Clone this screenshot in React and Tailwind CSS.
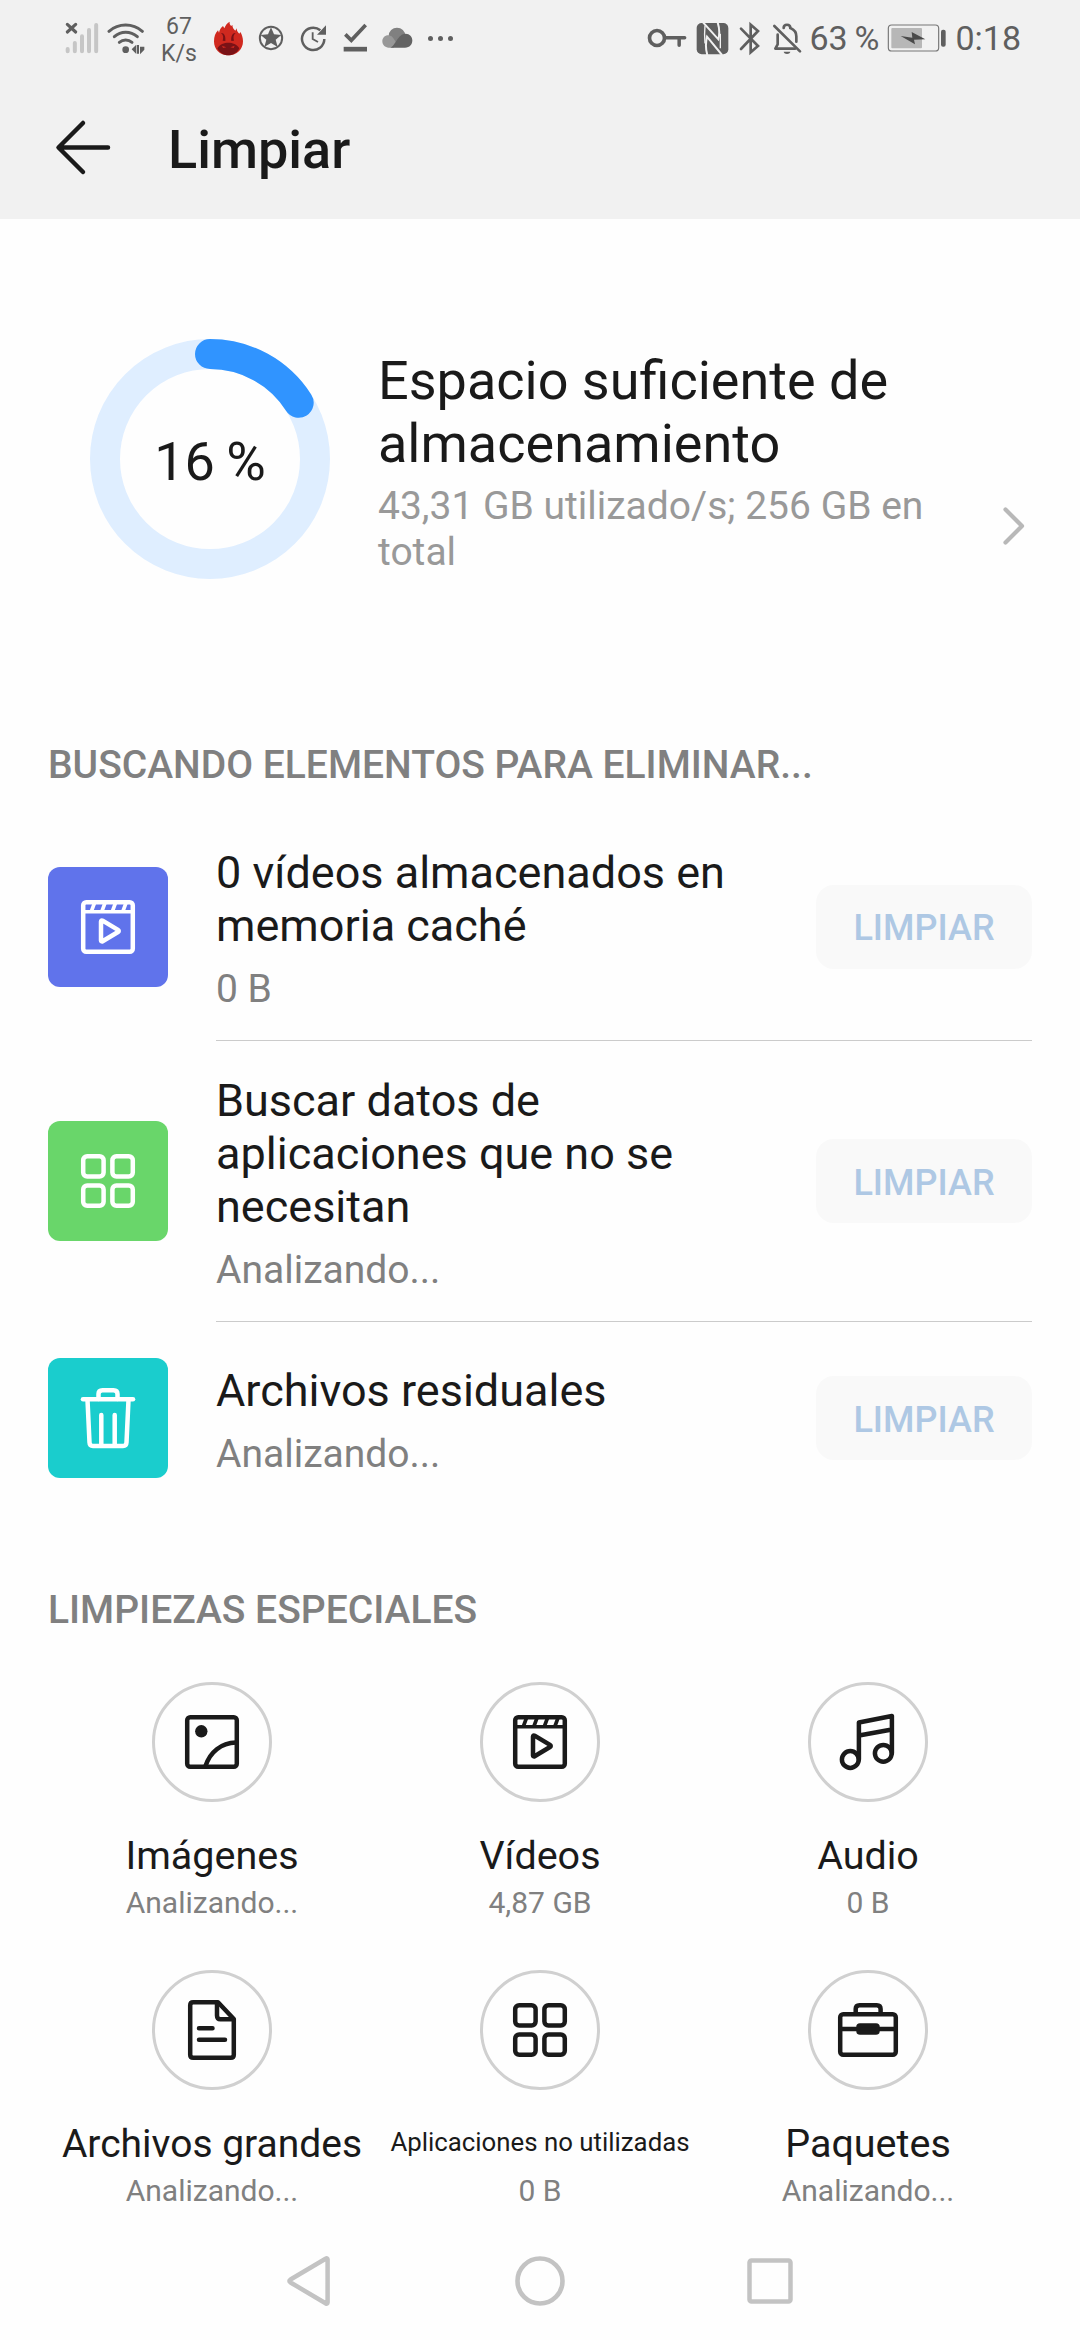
import React from "react";

/* ---------- Status bar icons ---------- */

function SignalIcon() {
  return (
    <svg width="35" height="35" viewBox="75 60 105 105" fill="none">
      <g stroke="#c6c6c6" strokeWidth="12" strokeLinecap="round">
        <path d="M83 144v7M104.500 126v25M126 106v45M147 87v64M168.500 72v79" />
      </g>
      <path d="M82 70l25 23M107 70L82 93" stroke="#5f5f5f" strokeWidth="9.500" strokeLinecap="round" />
    </svg>
  );
}

function WifiIcon() {
  return (
    <svg width="38" height="35" viewBox="201 60 114 105" fill="none">
      <g stroke="#5f5f5f" strokeWidth="9" strokeLinecap="round">
        <path d="M207 91C236 66 278 66 307 91" />
        <path d="M223 107C243 89 271 89 292 107" />
        <path d="M238 124C249 115 265 115 276 124" />
      </g>
      <circle cx="257" cy="146" r="10" fill="#5f5f5f" />
      <path d="M275 145L288 132V158ZM290 132H297V158H290ZM300 132V160L313 146V137H300Z" fill="#5f5f5f" />
    </svg>
  );
}

function FlameIcon() {
  return (
    <svg width="31" height="35" viewBox="521 62 93 105">
      <path
        d="M567 165C541 165 524 147 524 123C524 109 528 98 536 90L539 97C541 88 545 81 551 77L555 84C558 76 563 68 571 64C570 70 572 74 576 77L579 73C579 81 583 86 588 91L592 84C592 92 595 95 600 100L603 95C608 103 611 113 611 123C611 147 593 165 567 165Z"
        fill="#d0291f"
      />
      <path d="M534 144C541 132 555 127 567 127S593 132 600 144C594 157 582 165 567 165S540 157 534 144Z" fill="#7a1216" />
      <path d="M545 98C554 97 560 108 558 122L550 121C553 111 552 103 545 98ZM589 98C580 97 574 108 576 122L584 121C581 111 582 103 589 98Z" fill="#7a1216" />
      <path d="M548 136l13 5-10 2zM586 136l-13 5 10 2z" fill="#d0291f" />
    </svg>
  );
}

function StarIcon() {
  return (
    <svg width="26" height="26" viewBox="654 75 78 78">
      <circle cx="693" cy="114" r="33.500" fill="none" stroke="#5f5f5f" strokeWidth="6" />
      <path d="M693 82L702 103L724 105L707 119L713 141L693 129L673 141L679 119L662 105L684 103Z" fill="#5f5f5f" />
    </svg>
  );
}

function UpdateIcon() {
  return (
    <svg width="28" height="28" viewBox="777 72 84 84" fill="none">
      <path d="M841 91A33.500 33.500 0 1 0 853 117" stroke="#5f5f5f" strokeWidth="7.500" />
      <path d="M858 76V104H831Z" fill="#5f5f5f" />
      <path d="M818 97V117L834 126" stroke="#5f5f5f" strokeWidth="5.500" />
    </svg>
  );
}

function CheckIcon() {
  return (
    <svg width="25" height="30" viewBox="909 70 75 90" fill="none">
      <path d="M916 104L934 122L977 76" stroke="#5f5f5f" strokeWidth="11" />
      <path d="M911 148.500H981" stroke="#5f5f5f" strokeWidth="14" />
    </svg>
  );
}

function CloudIcon() {
  return (
    <svg width="31" height="22" viewBox="1025 82 93 66">
      <circle cx="1070" cy="109" r="25" fill="#808080" />
      <path d="M1044 107C1033 107 1026 115 1026 125S1034 144 1045 144H1060L1067 128C1060 118 1056 107 1044 107Z" fill="#989898" />
      <path d="M1050 144C1066 138 1072 102 1096 102C1108 102 1116 111 1116 122C1116 135 1108 144 1094 144Z" fill="#636363" />
    </svg>
  );
}

function KeyIcon() {
  return (
    <svg width="40" height="22" viewBox="81 78 120 66" fill="none" stroke="#5f5f5f">
      <circle cx="111" cy="111" r="22.500" strokeWidth="11" />
      <path d="M134 110.500H194M177.500 112V133" strokeWidth="10.500" strokeLinecap="round" />
    </svg>
  );
}

function NfcIcon() {
  return (
    <svg width="33" height="33" viewBox="229 61 99 99" fill="none">
      <rect x="231" y="64" width="95" height="94" rx="15" fill="#5f5f5f" />
      <path d="M250 62L296 113C300 98 299 78 294 62" stroke="#f1f1f1" strokeWidth="6" />
      <path d="M307 160L262 105C258 122 258 144 263 160" stroke="#f1f1f1" strokeWidth="6" />
      <path d="M256 72C254 90 254 100 256 125M302 96V140" stroke="#f1f1f1" strokeWidth="4" />
    </svg>
  );
}

function BluetoothIcon() {
  return (
    <svg width="22" height="35" viewBox="356 58 66 105" fill="none">
      <path d="M362 81L413 133L391 152V69L413 88L362 142" stroke="#5f5f5f" strokeWidth="8" strokeLinecap="round" />
    </svg>
  );
}

function BellOffIcon() {
  return (
    <svg width="30" height="35" viewBox="453 58 90 105" fill="none">
      <path d="M488 79C488 66 508 66 508 79C520 84 526 93 526 104V120" stroke="#5f5f5f" strokeWidth="8" strokeLinecap="round" />
      <path d="M470 99V128L463 141H522" stroke="#5f5f5f" strokeWidth="8" strokeLinejoin="round" strokeLinecap="round" />
      <path d="M460 73L537 149" stroke="#5f5f5f" strokeWidth="8" strokeLinecap="round" />
      <path d="M488 150H508C506 159 490 159 488 150Z" fill="#5f5f5f" />
    </svg>
  );
}

function BatteryIcon() {
  return (
    <svg width="60" height="30" viewBox="799 67 180 90">
      <rect x="803" y="73" width="151" height="78" rx="10" fill="none" stroke="#777" strokeWidth="3.500" />
      <rect x="812" y="82" width="92" height="61" rx="3" fill="#b7b7b7" />
      <path d="M840 106L875 111L873 94L914 116L880 117L883 131Z" fill="#4a4a4a" />
      <rect x="961" y="87" width="14" height="51" rx="6" fill="#5f5f5f" />
    </svg>
  );
}

/* ---------- Content icons, 72x72 grid ---------- */

function Icon({ children }) {
  return (
    <svg
      width="72"
      height="72"
      viewBox="0 0 72 72"
      fill="none"
      stroke="currentColor"
      strokeWidth="4.500"
      strokeLinecap="round"
      strokeLinejoin="round"
    >
      {children}
    </svg>
  );
}

function VideoIcon() {
  return (
    <Icon>
      <rect x="11.200" y="11.200" width="49.600" height="49.600" rx="3" />
      <path d="M11 20.800H61" strokeWidth="3.600" />
      <path d="M19.500 20L22.500 12M30 20L33 12M40.500 20L43.500 12M51 20L54 12" strokeWidth="3.600" strokeLinecap="butt" />
      <path d="M29 30.500C29 29.500 29.800 29.200 30.600 29.700L46 38.900C47 39.500 47 40.400 46 41L30.600 50.200C29.800 50.700 29 50.300 29 49.400Z" />
    </Icon>
  );
}

function AppsIcon() {
  return (
    <Icon>
      <rect x="11.200" y="11.200" width="20.400" height="20.400" rx="4" />
      <rect x="40.400" y="11.200" width="20.400" height="20.400" rx="4" />
      <rect x="11.200" y="40.400" width="20.400" height="20.400" rx="4" />
      <rect x="40.400" y="40.400" width="20.400" height="20.400" rx="4" />
    </Icon>
  );
}

function TrashIcon() {
  return (
    <Icon>
      <path d="M11 17.300H61" />
      <path d="M26.500 17V12C26.500 9.500 28 8.200 30.500 8.200H41.500C44 8.200 45.500 9.500 45.500 12V17" />
      <path d="M15.500 18L17.500 60.500C17.600 63 18.800 64 21 64H51C53.200 64 54.400 63 54.500 60.500L56.500 18" />
      <path d="M29.300 33V63M42.700 33V63" />
    </Icon>
  );
}

function ImageIcon() {
  return (
    <Icon>
      <rect x="11.200" y="11.200" width="49.600" height="49.600" rx="3" />
      <circle cx="25.300" cy="25.300" r="6.200" fill="currentColor" stroke="none" />
      <path d="M29.500 60C34 46 45 37 60 36.500" />
    </Icon>
  );
}

function MusicIcon() {
  return (
    <Icon>
      <circle cx="18.300" cy="53.500" r="8.400" />
      <circle cx="51.300" cy="47.300" r="8.400" />
      <path d="M26.900 53.500V16.500L59.900 10V47.300M27 29.500L59.900 23.500" />
    </Icon>
  );
}

function FileIcon() {
  return (
    <Icon>
      <path d="M42 8.200H17.200C15.200 8.200 14.200 9.200 14.200 11.200V60.800C14.200 62.800 15.200 63.800 17.200 63.800H54.800C56.800 63.800 57.800 62.800 57.800 60.800V25Z" />
      <path d="M41 9V21.500C41 24 42.500 25.300 44.500 25.300H57" />
      <path d="M23 34.300H36.500M23 45.700H49" />
    </Icon>
  );
}

function BriefcaseIcon() {
  return (
    <Icon>
      <rect x="8.200" y="20.200" width="55.600" height="40.600" rx="3" />
      <path d="M23.700 19V15C23.700 12.500 25 11.200 27.500 11.200H44.800C47.300 11.200 48.600 12.500 48.600 15V19" />
      <path d="M9 35H63" />
      <rect x="26.500" y="31.500" width="19" height="7" rx="1.500" fill="currentColor" />
    </Icon>
  );
}

const cleanupItems = [
  { title: "0 vídeos almacenados en memoria caché", detail: "0 B", icon: <VideoIcon />, row: "h-[228px]", tile: "bg-[#6073eb]" },
  { title: "Buscar datos de aplicaciones que no se necesitan", detail: "Analizando...", icon: <AppsIcon />, row: "h-[281px]", tile: "mb-px bg-[#69d66a]" },
  { title: "Archivos residuales", detail: "Analizando...", icon: <TrashIcon />, row: "h-[192px]", tile: "bg-[#1acdcd]" },
];

const categories = [
  { label: "Imágenes", detail: "Analizando...", icon: <ImageIcon />, size: "text-[39.500px] leading-[46px]" },
  { label: "Vídeos", detail: "4,87 GB", icon: <VideoIcon />, size: "text-[39.500px] leading-[46px]" },
  { label: "Audio", detail: "0 B", icon: <MusicIcon />, size: "text-[39.500px] leading-[46px]" },
  { label: "Archivos grandes", detail: "Analizando...", icon: <FileIcon />, size: "text-[39px] leading-[46px]" },
  { label: "Aplicaciones no utilizadas", detail: "0 B", icon: <AppsIcon />, size: "text-[25.800px] leading-[42px] pb-1" },
  { label: "Paquetes", detail: "Analizando...", icon: <BriefcaseIcon />, size: "text-[39.500px] leading-[46px]" },
];

function StatusBar() {
  return (
    <div className="flex h-[76px] items-center justify-between pr-[59px] pl-[65px] text-[#5f5f5f]">
      <div className="flex items-center">
        <SignalIcon />
        <div className="ml-[7px] flex"><WifiIcon /></div>
        <div className="ml-4 w-[36px] pt-[3px] text-center text-[23px] leading-[27px]">
          <div>67</div>
          <div>K/s</div>
        </div>
        <div className="ml-4 flex"><FlameIcon /></div>
        <div className="ml-[14px] flex"><StarIcon /></div>
        <div className="ml-[15px] flex"><UpdateIcon /></div>
        <div className="ml-4 flex"><CheckIcon /></div>
        <div className="ml-[14px] flex"><CloudIcon /></div>
        <div className="ml-[15px] flex gap-[5px]">
          <span className="size-[5px] rounded-full bg-[#5f5f5f]" />
          <span className="size-[5px] rounded-full bg-[#5f5f5f]" />
          <span className="size-[5px] rounded-full bg-[#5f5f5f]" />
        </div>
      </div>
      <div className="flex items-center">
        <KeyIcon />
        <div className="ml-[9px] flex"><NfcIcon /></div>
        <div className="ml-[10px] flex"><BluetoothIcon /></div>
        <div className="ml-[11px] flex"><BellOffIcon /></div>
        <span className="ml-[7px] w-[70px] text-[34px] leading-10 whitespace-nowrap [word-spacing:-1.5px]">63 %</span>
        <div className="ml-2 flex"><BatteryIcon /></div>
        <span className="ml-2 text-[34px] leading-10">0:18</span>
      </div>
    </div>
  );
}

function UsageRing({ percent }) {
  return (
    <div className="relative flex size-60 shrink-0 items-center justify-center">
      <svg className="absolute inset-0" width="240" height="240" viewBox="0 0 240 240" fill="none">
        <circle cx="120" cy="120" r="105" stroke="#dfeeff" strokeWidth="30" />
        <circle
          cx="120"
          cy="120"
          r="105"
          stroke="#3094ff"
          strokeWidth="30"
          strokeLinecap="round"
          pathLength="100"
          strokeDasharray={`${percent} 100`}
          transform="rotate(-90 120 120)"
        />
      </svg>
      <span className="relative pt-1 text-[54px] leading-[63px] [word-spacing:-2px]">{percent} %</span>
    </div>
  );
}

function App() {
  return (
    <div className="flex h-[2340px] w-[1080px] flex-col overflow-hidden bg-[#fefefe] font-['Roboto',sans-serif] text-[#1a1a1a]">
      <header className="h-[219px] shrink-0 bg-[#f1f1f1]">
        <StatusBar />
        <div className="flex h-[143px] items-center pl-[54px]">
          <svg width="58" height="58" viewBox="0 0 58 58" fill="none" stroke="currentColor" strokeWidth="4.500" strokeLinecap="round" strokeLinejoin="round">
            <path d="M29 4L4.500 28.500L29 53M5 28.500H54" />
          </svg>
          <h1 className="ml-14 pt-1 text-[54px] leading-[63px] font-medium">Limpiar</h1>
        </div>
      </header>

      {/* Storage summary */}
      <section className="flex h-[523px] shrink-0 items-start pt-[120px] pl-[90px]">
        <UsageRing percent={16} />
        <div className="ml-12 w-[570px] pt-[10px]">
          <h2 className="text-[54px] leading-[63px]">Espacio suficiente de almacenamiento</h2>
          <p className="mt-2 text-[39px] leading-[46px] text-[#999]">43,31 GB utilizado/s; 256 GB en total</p>
        </div>
        <svg className="mt-[167px] ml-[54px]" width="24" height="40" viewBox="0 0 24 40" fill="none" stroke="#b8b8b8" strokeWidth="4.200" strokeLinecap="round" strokeLinejoin="round">
          <path d="M3.500 3.500L20 20L3.500 36.500" />
        </svg>
      </section>

      {/* Items to delete */}
      <h3 className="h-[71px] shrink-0 pl-12 text-[39px] leading-[46px] font-medium text-[#808080]">
        BUSCANDO ELEMENTOS PARA ELIMINAR...
      </h3>
      <ul className="shrink-0 px-12">
        {cleanupItems.map((item, i) => (
          <li key={item.title} className={`flex ${item.row}`}>
            <div className={`flex size-[120px] shrink-0 items-center justify-center self-center rounded-xl text-white ${item.tile}`}>
              {item.icon}
            </div>
            <div className={`ml-12 flex flex-1 items-center justify-between ${i < cleanupItems.length - 1 ? "border-b border-[#cbcbcb]" : ""}`}>
              <div className="w-[520px] pt-[5px]">
                <p className="text-[45px] leading-[53px]">{item.title}</p>
                <p className="mt-[14px] text-[39px] leading-[46px] text-[#808080]">{item.detail}</p>
              </div>
              <button type="button" className="h-[84px] w-[216px] rounded-[18px] bg-[#f9f9f9] pt-[3px] text-[36px] leading-[42px] font-medium text-[#aec8e4]">
                LIMPIAR
              </button>
            </div>
          </li>
        ))}
      </ul>

      {/* Special cleanups */}
      <h3 className="mt-[73px] h-[95px] shrink-0 pl-12 text-[39px] leading-[46px] font-medium text-[#808080]">
        LIMPIEZAS ESPECIALES
      </h3>
      <div className="grid shrink-0 grid-cols-3 px-12">
        {categories.map((cat) => (
          <div key={cat.label} className="flex h-72 flex-col items-center">
            <div className="flex size-[120px] items-center justify-center rounded-full border-[3px] border-[#d0d0d0]">
              {cat.icon}
            </div>
            <p className={`mt-[31px] whitespace-nowrap ${cat.size}`}>{cat.label}</p>
            <p className="mt-1.5 text-[30px] leading-[35px] text-[#808080]">{cat.detail}</p>
          </div>
        ))}
      </div>

      {/* System navigation */}
      <nav className="flex h-[82px] shrink-0 items-end justify-between pr-[286px] pl-[285px]">
        <svg className="mb-[31px]" width="48" height="56" viewBox="0 0 48 56" fill="none" stroke="#c3c3c3" strokeWidth="4.500" strokeLinejoin="round">
          <path d="M41 5.500C41.800 5 42.600 5.400 42.600 6.400V49.600C42.600 50.600 41.800 51 41 50.500L5.500 29.500C4 28.500 4 27.500 5.500 26.500Z" />
        </svg>
        <svg className="mb-[33px]" width="52" height="52" viewBox="0 0 52 52" fill="none" stroke="#c3c3c3" strokeWidth="4.600">
          <circle cx="26" cy="26" r="22.500" />
        </svg>
        <svg className="mb-[35px]" width="48" height="48" viewBox="0 0 48 48" fill="none" stroke="#c3c3c3" strokeWidth="4.500">
          <rect x="3.500" y="3.500" width="41" height="41" rx="2" />
        </svg>
      </nav>
    </div>
  );
}

export default App;
